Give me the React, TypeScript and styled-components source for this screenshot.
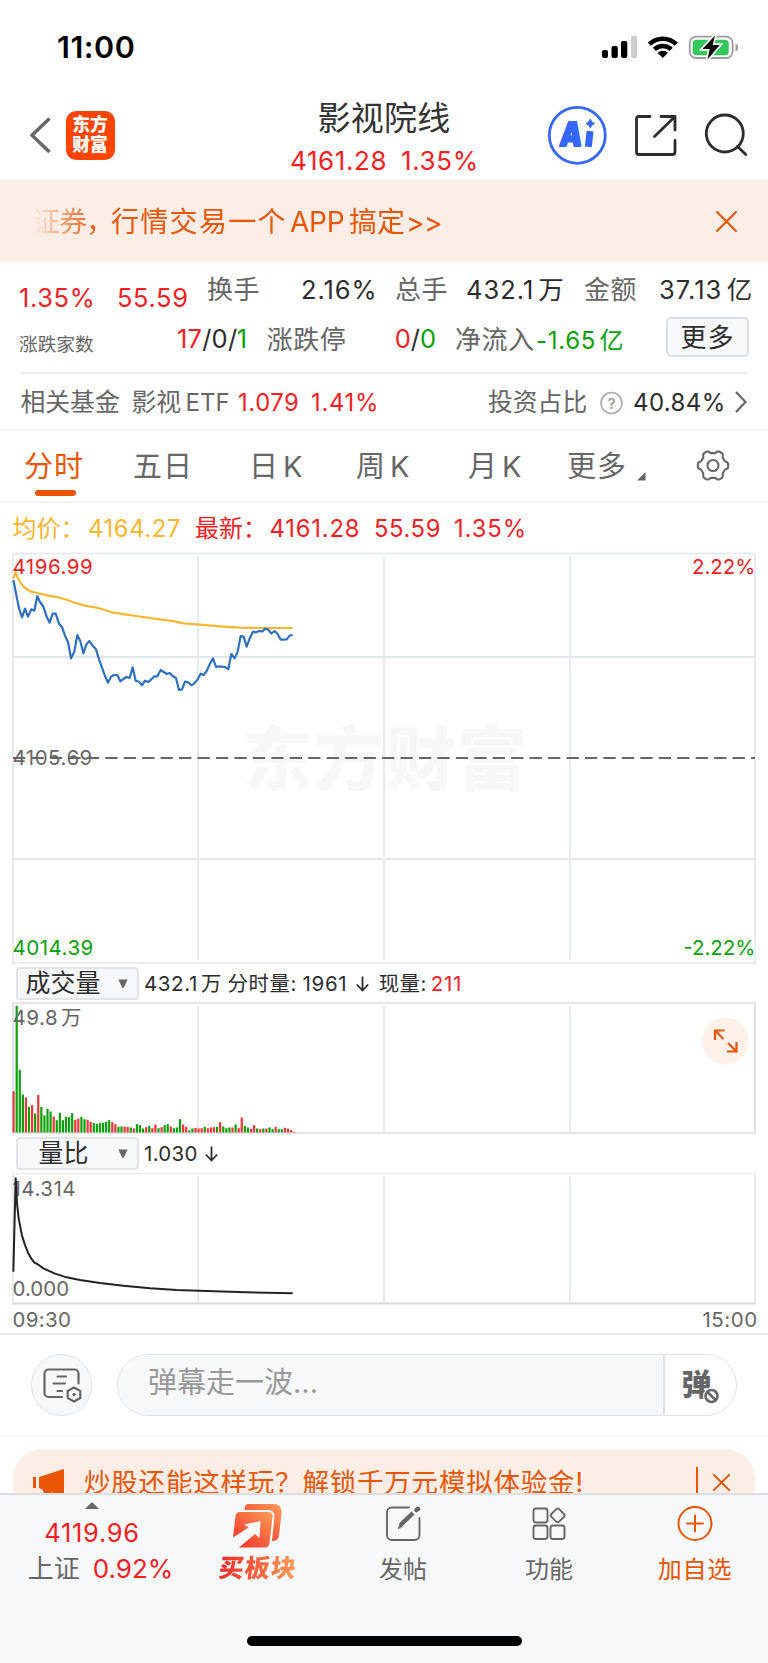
import React from "react";
import styled, { createGlobalStyle } from "styled-components";

const C = {
  red: "#fb1d1f",
  green: "#09a209",
  orange: "#ea5504",
  ink: "#2d2d2d",
  grey: "#666",
  gold: "#fdb52f",
  blue: "#2c6fc0",
  line: "#e3e5ec",
  soft: "#f7f8fa",
  peach: "#fceee7",
};

const Global = createGlobalStyle`
  body { margin: 0; background: #fff; }
  * { box-sizing: border-box; }
  svg { display: block; flex: none; }
`;

const Page = styled.div`
  width: 768px;
  height: 1663px;
  overflow: hidden;
  display: flex;
  flex-direction: column;
  background: #fff;
  color: ${C.ink};
  font-family: Inter, "Noto Sans CJK SC", sans-serif;
`;

const Bar = styled.div<{ $h: number; $pl?: number; $line?: string }>`
  flex: none;
  display: flex;
  align-items: flex-start;
  height: ${(p) => p.$h}px;
  padding-left: ${(p) => p.$pl ?? 0}px;
  border-bottom: ${(p) => (p.$line ? `2px solid ${p.$line}` : "0")};
`;

/* One text slot of a row: fixed width, centred on half of its own line height. */
const Slot = styled.span<{ $w?: number; $h: number; $s: number; $c?: string; $ls?: number; $b?: number }>`
  flex: none;
  display: block;
  width: ${(p) => (p.$w ? `${p.$w}px` : "auto")};
  line-height: ${(p) => p.$h}px;
  font-size: ${(p) => p.$s}px;
  color: ${(p) => p.$c ?? C.ink};
  letter-spacing: ${(p) => p.$ls ?? 0}px;
  font-weight: ${(p) => p.$b ?? 400};
  white-space: pre;
`;
const Unit = styled.span<{ $gap?: number }>`
  margin-left: ${(p) => p.$gap ?? 4}px;
`;

const StatusBar = styled.div`
  flex: none;
  display: flex;
  justify-content: space-between;
  height: 88px;
  padding: 32px 28px 0 57px;
`;

const NavBar = styled.header`
  flex: none;
  display: grid;
  grid-template-columns: 290px 188px 1fr;
  height: 94px;
  border-bottom: 2px solid #efefef;
`;
const NavSide = styled.div<{ $pl: number; $gap: number }>`
  display: flex;
  align-items: center;
  gap: ${(p) => p.$gap}px;
  padding-left: ${(p) => p.$pl}px;
`;
const Logo = styled.div`
  display: flex;
  flex-direction: column;
  align-items: center;
  width: 49px;
  height: 49px;
  padding: 4px 0 0;
  border-radius: 10px;
  background: #ff4400;
  color: #fff;
  font: 800 17.8px/20.5px Inter, "Noto Sans CJK SC", sans-serif;
`;
const Title = styled.div`
  display: flex;
  flex-direction: column;
  align-items: center;
  padding-top: 8px;
`;
const TitlePrice = styled.div`
  display: flex;
  align-self: stretch;
`;

const Banner = styled(Bar)`
  background: ${C.peach};
`;
const Marquee = styled.div`
  width: 682px;
  overflow: hidden;
  display: flex;
  mask-image: linear-gradient(90deg, transparent 0, #000 64px);
`;

const MoreButton = styled.button`
  width: 83px;
  height: 40px;
  margin: 3px 0 0;
  padding: 0;
  border: 2px solid #dcdfe6;
  border-radius: 5px;
  background: ${C.soft};
  color: ${C.ink};
  font: 400 26px/35px Inter, "Noto Sans CJK SC", sans-serif;
  letter-spacing: 1px;
`;
const Rule = styled.div`
  flex: none;
  height: 2px;
  margin: 0 21px;
  background: #ececec;
`;

const Tab = styled.div<{ $w: number; $on?: boolean }>`
  flex: none;
  width: ${(p) => p.$w}px;
  line-height: 72px;
  font-size: 29px;
  letter-spacing: 1px;
  color: ${(p) => (p.$on ? C.orange : C.grey)};
  &::after {
    content: "";
    display: ${(p) => (p.$on ? "block" : "none")};
    width: 41px;
    height: 6px;
    margin: -13px 0 0 11px;
    border-radius: 3px;
    background: ${C.orange};
  }
`;

const Plot = styled.svg`
  font-family: Inter, "Noto Sans CJK SC", sans-serif;
  font-size: 20.5px;
  letter-spacing: 0.5px;
`;

const Picker = styled.div`
  flex: none;
  display: flex;
  align-items: center;
  width: 123px;
  height: 33px;
  margin: 3px 5px 0 16px;
  border: 2px solid #e2e4e9;
  border-radius: 4px;
  background: ${C.soft};
`;
const PickerText = styled.div<{ $pl: number }>`
  width: 100px;
  padding-left: ${(p) => p.$pl}px;
  font-size: 25px;
  line-height: 29px;
  white-space: nowrap;
`;

const ChatRow = styled.div`
  flex: none;
  display: flex;
  align-items: center;
  height: 102px;
  padding-left: 31px;
  border-bottom: 2px solid #f6f6f7;
`;
const RoundButton = styled.div`
  width: 61px;
  height: 62px;
  border: 1.5px solid #dfe1e6;
  border-radius: 31px;
  background: ${C.soft};
  margin-right: 25px;
`;
const ChatInput = styled.div`
  display: flex;
  width: 620px;
  height: 62px;
  border: 1.5px solid #dfe1e6;
  border-radius: 31px;
  overflow: hidden;
`;
const Placeholder = styled.div`
  width: 545px;
  padding-left: 30px;
  background: ${C.soft};
  color: #999;
  font-size: 29px;
  line-height: 55px;
`;
const DanmuSwitch = styled.div`
  flex: 1;
  border-left: 2px solid #dfe1e6;
`;

const PromoArea = styled.div`
  flex: none;
  height: 56px;
  padding: 12px 13px 0;
  overflow: hidden;
`;
const Promo = styled.div`
  display: flex;
  height: 66px;
  border-radius: 29px;
  background: ${C.peach};
`;

const BottomNav = styled.nav`
  flex: none;
  display: flex;
  height: 143px;
  border-top: 2px solid #dcdee2;
  background: ${C.soft};
`;
const NavItem = styled.div<{ $c?: string; $w?: number }>`
  flex: none;
  width: ${(p) => p.$w ?? 146}px;
  display: flex;
  flex-direction: column;
  align-items: center;
  color: ${(p) => p.$c ?? C.grey};
  font-size: 24px;
  line-height: 36px;
  white-space: nowrap;
`;
const NavLabel = styled.div<{ $ls?: number }>`
  padding-top: 1px;
  letter-spacing: ${(p) => p.$ls ?? 0}px;
`;
const IndexValue = styled.div`
  font-size: 25.5px;
  line-height: 36px;
  letter-spacing: 0.7px;
  color: ${C.red};
`;
const IndexLine = styled.div`
  display: flex;
  margin-left: 17px;
`;
const BuyLabel = styled.div`
  margin: -1px 0 0 3px;
  font-size: 25px;
  letter-spacing: 1px;
  font-weight: 900;
  transform: skewX(-6deg);
  background: linear-gradient(90deg, #ee2a26, #ff9d58);
  background-clip: text;
  -webkit-background-clip: text;
  color: transparent;
`;
const HomeArea = styled.div`
  flex: none;
  height: 27px;
  background: ${C.soft};
`;
const HomeIndicator = styled.div`
  width: 275px;
  height: 10px;
  margin-left: 247px;
  border-radius: 5px;
  background: #000;
`;

const StatusGlyphs = () => (
  <svg width="140" height="30" viewBox="600 32 140 30">
    <rect x="602" y="50" width="6" height="8" rx="2" />
    <rect x="611.5" y="46" width="6.3" height="12" rx="2" />
    <rect x="621" y="41" width="6.3" height="17" rx="2" />
    <rect x="631" y="36" width="6" height="22" rx="2" fill="#ccc" />
    <g fill="none" stroke="#000" strokeWidth="4.6">
      <path d="M649.3 44.2a19.5 19.5 0 0 1 27 0" />
      <path d="M654.4 49.4a12.2 12.2 0 0 1 16.8 0" />
    </g>
    <path d="M662.8 58l-5.2-5.2a7.6 7.6 0 0 1 10.4 0z" />
    <rect x="689.7" y="36.7" width="43" height="21.3" rx="6.5" fill="none" stroke="#9d9d9d" strokeWidth="1.8" />
    <path d="M735.5 43.5c3.6 1 3.6 7 0 8z" fill="#9d9d9d" />
    <rect x="692.7" y="39.7" width="36" height="15.5" rx="3.6" fill="#34c759" />
    <path d="M715 35.5L702.5 49h7.2l-2.2 10.5L719.8 45h-7.2z" stroke="#fff" strokeWidth="3.4" />
    <path d="M715 35.5L702.5 49h7.2l-2.2 10.5L719.8 45h-7.2z" />
  </svg>
);

const NavGlyphs = () => (
  <svg width="206" height="64" viewBox="546 103 206 64" fill="none" stroke={C.ink} strokeWidth="2.8" strokeLinecap="round" strokeLinejoin="round">
    <circle cx="577.3" cy="135.3" r="28" stroke="#3567fa" strokeWidth="2.8" />
    <text transform="translate(559 145.500) skewX(-6) scale(.84 1)" fontSize="33" fontWeight="900" fill="#3567fa" stroke="#3567fa" strokeWidth="2" fontFamily="Inter, sans-serif">A</text>
    <path d="M589.700 134.500L588.700 143.500" stroke="#3567fa" strokeWidth="7" strokeLinecap="square" />
    <path d="M590.300 119.300q1 3.500 4.300 4.300q-3.300 .8-4.300 4.300q-1-3.500-4.300-4.300q3.300-.8 4.300-4.300z" fill="#3567fa" stroke="#3567fa" strokeWidth="1" />
    <path d="M650 116.500H639a2.500 2.500 0 0 0-2.500 2.500V152a2.500 2.500 0 0 0 2.500 2.500H672.500a2.500 2.500 0 0 0 2.500-2.500V140.500" />
    <path d="M661 116.500H675V130M675 116.500L654.500 136.500" />
    <circle cx="724.800" cy="133.500" r="18.500" />
    <path d="M737.500 146.500L745.800 154.500" />
  </svg>
);

const Cross = ({ s, w, c = C.orange }: { s: number; w: number; c?: string }) => (
  <svg width={s} height={s} viewBox="0 0 20 20" stroke={c} strokeWidth={w} strokeLinecap="round">
    <path d="M1 1L19 19M19 1L1 19" />
  </svg>
);
const CloseWrap = styled.div<{ $t: number; $l?: number }>`
  margin: ${(p) => p.$t}px 0 0 ${(p) => p.$l ?? 0}px;
`;

const gearPath = (() => {
  const pts: string[] = [];
  for (let i = 0; i < 96; i++) {
    const a = (i / 96) * Math.PI * 2;
    const r = 13.8 + 1.5 * Math.tanh(2 * Math.cos(6 * a));
    pts.push(`${(18 + r * Math.cos(a)).toFixed(2)} ${(18 + r * Math.sin(a)).toFixed(2)}`);
  }
  return `M${pts.join("L")}Z`;
})();

const Gear = () => (
  <svg width="36" height="70" viewBox="0 -16.5 36 70" fill="none" stroke={C.grey} strokeWidth="2.100">
    <path d={gearPath} strokeLinejoin="round" />
    <circle cx="18" cy="18" r="5.500" />
  </svg>
);

/* Price series are stored at a third of a pixel. */
const PRICE =
  "40,240 49,285 57,325 66,352 75,326 84,350 94,328 103,332 112,288 120,306 130,320 140,350 149,368 158,341 167,341 177,371 186,381 195,407 204,426 213,475 223,455 232,405 241,424 250,460 259,434 268,423 277,436 288,448 297,478 306,503 315,528 324,548 333,530 342,525 352,525 361,544 370,537 379,531 389,534 398,502 407,542 417,545 426,556 435,542 445,546 454,538 463,529 472,529 482,510 491,516 500,522 509,519 518,528 528,534 537,570 546,568 555,545 565,547 574,556 583,550 593,538 602,521 611,525 620,513 629,493 639,475 648,501 657,499 675,501 685,507 694,462 704,475 713,455 722,408 731,410 740,440 750,413 759,395 768,397 777,393 787,394 796,386 805,389 814,401 824,393 833,402 842,419 860,418 869,407 878,405";
const AVERAGE =
  "40,235 47,218 56,240 68,257 80,268 94,275 112,279 145,287 180,293 200,299 220,307 255,317 295,324 335,337 380,344 430,351 480,358 525,364 550,370 600,374 660,379 720,383 780,384 878,384";
const RATIO =
  "40,965 47,685 51,760 56,805 66,857 75,885 84,908 94,926 103,938 112,942 130,955 165,971 200,982 240,990 300,999 370,1007 450,1015 530,1020 620,1023 740,1027 878,1030";
const VOLUME =
  "r124 g380 g188 g114 r105 g77 r82 g57 r113 g77 g51 g71 g63 r48 g37 g59 g37 g47 g46 g58 r38 r42 g47 g40 r38 r32 g28 g26 g28 g29 g32 g37 r31 r25 g17 g18 r18 r17 g15 r12 g25 g22 g12 r16 g20 r13 r24 g13 r16 g22 g25 r18 g13 g15 g40 r24 r17 g6 g12 r14 r12 r13 g17 r13 r15 r16 g17 r31 g18 g13 g15 r15 g24 r13 r45 g20 g15 r11 r22 g12 r10 g12 r12 g15 g10 r17 g10 g10 r14 r12 r7 r2".split(" ");

const VLines = ({ y1, y2 }: { y1: number; y2: number }) => (
  <path d={[198, 384, 570].map((x) => `M${x} ${y1}V${y2}`).join("")} stroke="#e6e9f0" strokeWidth="2" />
);

const PriceChart = () => (
  <Plot width="768" height="412" viewBox="0 552 768 412" fill="none">
    <text x="242.500" y="785" fontSize="70" fontWeight="900" letterSpacing="1.500" fill="#f7f7f7">东方财富</text>
    <path d="M13 657H755M13 859H755" stroke={C.line} strokeWidth="1.800" />
    <VLines y1={556} y2={960} />
    <path d="M12.500 553.500H755M12.500 963H755M13 553V964M755 553V964" stroke={C.line} strokeWidth="1.500" />
    <path d="M13 758H755" stroke="#666" strokeWidth="2" strokeDasharray="12.300 6.150" />
    <g transform="translate(0 500) scale(.33333)" strokeWidth="6.500" strokeLinejoin="round">
      <polyline points={AVERAGE} stroke={C.gold} />
      <polyline points={PRICE} stroke={C.blue} />
    </g>
    <text x="12.500" y="573.500" fill={C.red}>4196.99</text>
    <text x="12.500" y="765" fill={C.grey}>4105.69</text>
    <text x="12.500" y="955" fill={C.green}>4014.39</text>
    <text x="755.500" y="573.500" textAnchor="end" letterSpacing="0" fill={C.red}>2.22%</text>
    <text x="755.500" y="955" textAnchor="end" letterSpacing="0" fill={C.green}>-2.22%</text>
  </Plot>
);

const VolumeChart = () => (
  <Plot width="768" height="132" viewBox="0 1002 768 132" fill="none">
    <VLines y1={1006} y2={1132} />
    <path d="M12.500 1003H755V1133H12.500M13 1003V1133" stroke="#dbdce3" strokeWidth="1.600" />
    {VOLUME.map((v, i) => {
      const h = Number(v.slice(1)) / 3;
      return <rect key={i} x={12.5 + i * 3.083} y={1132.5 - h} width="2.2" height={h} fill={v[0] === "r" ? "#f03438" : C.green} />;
    })}
    <text x="12.500" y="1025" fill={C.grey}>49.8<tspan dx="3">万</tspan></text>
    <circle cx="725.500" cy="1041" r="23.500" fill="#fdf1ea" />
    <path d="M715 1040V1030.500H724.500M715 1030.500L723.500 1039M736.500 1042V1051.500H727M736.500 1051.500L728 1043" stroke={C.orange} strokeWidth="2.200" />
  </Plot>
);

const RatioChart = () => (
  <Plot width="768" height="132" viewBox="0 1173 768 132" fill="none">
    <VLines y1={1176} y2={1302} />
    <path d="M12.500 1173.500H755" stroke="#ebecf0" strokeWidth="1.500" />
    <path d="M755 1173V1304M13 1173V1304" stroke="#dfe1e7" strokeWidth="1.500" />
    <path d="M12.500 1303.500H755" stroke="#d6d8de" strokeWidth="1.800" />
    <text x="12.500" y="1195.500" fill={C.grey}>14.314</text>
    <text x="12.500" y="1296" fill={C.grey} letterSpacing="0">0.000</text>
    <polyline transform="translate(0 950) scale(.33333)" points={RATIO} stroke="#222" strokeWidth="6" strokeLinejoin="round" />
  </Plot>
);

const Caret = () => (
  <svg width="10" height="9" viewBox="0 0 10 9" fill={C.grey}>
    <path d="M.3 .5H9.700L5.500 9H4.500z" />
  </svg>
);
const DownArrow = ({ h }: { h: number }) => (
  <svg width="21" height={h} viewBox={`-4 ${-h / 2} 21 ${h}`} fill="none" stroke={C.ink} strokeWidth="1.800">
    <path d="M6.500 -7V7M.8 1L6.500 7L12.200 1" />
  </svg>
);

export default function App() {
  return (
    <>
      <Global />
      <Page>
        <StatusBar>
          <Slot $h={30} $s={30.5} $b={600} $c="#000" $ls={0.5}>11:00</Slot>
          <StatusGlyphs />
        </StatusBar>

        <NavBar>
          <NavSide $pl={28} $gap={13.5}>
            <svg width="24" height="40" viewBox="28 115 24 40" fill="none" stroke={C.grey} strokeWidth="3.400">
              <path d="M49.500 118.500L32 135.300L49.500 152" />
            </svg>
            <Logo><span>东方</span><span>财富</span></Logo>
          </NavSide>
          <Title>
            <Slot $h={44} $s={33} $c="#333" $ls={0.3}>影视院线</Slot>
            <TitlePrice>
              <Slot $h={42} $s={26} $w={111} $c={C.red} $ls={0.6}>4161.28</Slot>
              <Slot $h={42} $s={26} $c={C.red} $ls={0.6}>1.35%</Slot>
            </TitlePrice>
          </Title>
          <NavSide $pl={68} $gap={0}><NavGlyphs /></NavSide>
        </NavBar>

        <Banner $h={80} $pl={32}>
          <Marquee>
            <Slot $h={80} $s={28} $w={79} $c={C.orange} $ls={-1}>证券，</Slot>
            <Slot $h={80} $s={28} $w={179} $c={C.orange} $ls={1.3}>行情交易一个</Slot>
            <Slot $h={80} $s={28} $w={59} $c={C.orange} $ls={-0.2}>APP</Slot>
            <Slot $h={80} $s={28} $w={57} $c={C.orange}>搞定</Slot>
            <Slot $h={82} $s={28} $c={C.orange} $ls={-0.5}>&gt;&gt;</Slot>
          </Marquee>
          <CloseWrap $t={29} $l={2}><Cross s={21} w={2} /></CloseWrap>
        </Banner>

        <Bar $h={52} $pl={19}>
          <Slot $h={71} $s={25.5} $w={98} $c={C.red} $ls={0.6}>1.35%</Slot>
          <Slot $h={71} $s={25.5} $w={90} $c={C.red} $ls={0.6}>55.59</Slot>
          <Slot $h={56} $s={26} $w={94} $c={C.grey} $ls={0.5}>换手</Slot>
          <Slot $h={56} $s={25.5} $w={94} $ls={0.9}>2.16%</Slot>
          <Slot $h={56} $s={26} $w={71} $c={C.grey} $ls={0.5}>总手</Slot>
          <Slot $h={56} $s={25.5} $w={118} $ls={1}>432.1<Unit>万</Unit></Slot>
          <Slot $h={56} $s={26} $w={75} $c={C.grey} $ls={0.5}>金额</Slot>
          <Slot $h={56} $s={25.5} $ls={1}>37.13<Unit $gap={4.5}>亿</Unit></Slot>
        </Bar>
        <Bar $h={58} $pl={19}>
          <Slot $h={61} $s={18.7} $w={158} $c={C.grey}>涨跌家数</Slot>
          <Slot $h={50} $s={25.5} $c={C.red} $ls={0.2}>17</Slot>
          <Slot $h={50} $s={25.5} $w={34.5} $ls={0.2}>/0/</Slot>
          <Slot $h={50} $s={25.5} $w={30} $c={C.green}>1</Slot>
          <Slot $h={51} $s={26} $w={128} $c={C.grey} $ls={0.5}>涨跌停</Slot>
          <Slot $h={50} $s={25.5} $c={C.red}>0</Slot>
          <Slot $h={50} $s={25.5}>/</Slot>
          <Slot $h={50} $s={25.5} $w={35} $c={C.green}>0</Slot>
          <Slot $h={51} $s={26} $w={81} $c={C.grey} $ls={0.5}>净流入</Slot>
          <Slot $h={54} $s={24} $w={130} $c={C.green} $ls={0.7}>-1.65<Unit $gap={3.5}>亿</Unit></Slot>
          <MoreButton>更多</MoreButton>
        </Bar>
        <Rule />

        <Bar $h={57} $pl={20.5} $line="#f3f3f3">
          <Slot $h={57} $s={24.800} $w={111} $c={C.grey}>相关基金</Slot>
          <Slot $h={57} $s={24.800} $w={54} $c={C.grey}>影视</Slot>
          <Slot $h={57} $s={24} $w={52.5} $c={C.grey}>ETF</Slot>
          <Slot $h={57} $s={23.800} $w={73} $c={C.red} $ls={0.6}>1.079</Slot>
          <Slot $h={57} $s={23.800} $w={177} $c={C.red} $ls={0.7}>1.41%</Slot>
          <Slot $h={57} $s={24.800} $w={112} $c={C.grey}>投资占比</Slot>
          <svg width="33" height="57" viewBox="0 0 33 57" fontFamily="Inter, sans-serif">
            <circle cx="11.500" cy="29" r="10.500" fill="none" stroke="#aaa" strokeWidth="1.600" />
            <text x="11.500" y="34.500" fontSize="15" textAnchor="middle" fill="#888">?</text>
          </svg>
          <Slot $h={57} $s={24} $w={102} $ls={0.4}>40.84%</Slot>
          <svg width="12" height="57" viewBox="0 0 12 57" fill="none" stroke={C.grey} strokeWidth="2.200">
            <path d="M1 18L10.500 28L1 38" />
          </svg>
        </Bar>

        <Bar $h={72} $pl={24} $line="#f3f3f3">
          <Tab $w={109} $on>分时</Tab>
          <Tab $w={116}>五日</Tab>
          <Tab $w={107}>日<Unit>K</Unit></Tab>
          <Tab $w={112}>周<Unit>K</Unit></Tab>
          <Tab $w={99}>月<Unit>K</Unit></Tab>
          <Tab $w={70}>更多</Tab>
          <svg width="58" height="70" viewBox="0 0 58 70" fill={C.grey}><path d="M8.500 41V49.500H0z" /></svg>
          <Gear />
        </Bar>

        <Bar $h={49} $pl={12.5}>
          <Slot $h={51} $s={24} $w={75.5} $c={C.gold}>均价：</Slot>
          <Slot $h={51} $s={23.800} $w={107} $c={C.gold} $ls={0.6}>4164.27</Slot>
          <Slot $h={51} $s={24} $w={74.5} $c={C.red}>最新：</Slot>
          <Slot $h={51} $s={23.800} $w={104.5} $c={C.red} $ls={0.8}>4161.28</Slot>
          <Slot $h={51} $s={23.800} $w={80} $c={C.red} $ls={0.6}>55.59</Slot>
          <Slot $h={51} $s={23.800} $c={C.red} $ls={0.9}>1.35%</Slot>
        </Bar>

        <PriceChart />
        <Bar $h={38}>
          <Picker><PickerText $pl={7.5}>成交量</PickerText><Caret /></Picker>
          <Slot $h={39} $s={20.5} $w={83.5} $ls={0.6}>432.1<Unit $gap={3}>万</Unit></Slot>
          <Slot $h={39} $s={20.5} $w={75} $ls={0.5}>分时量:</Slot>
          <Slot $h={39} $s={20.5} $w={49} $ls={0.7}>1961</Slot>
          <DownArrow h={39} />
          <Slot $h={39} $s={20.5} $w={52} $ls={0.4}> 现量:</Slot>
          <Slot $h={39} $s={20.5} $c={C.red} $ls={0.6}> 211</Slot>
        </Bar>
        <VolumeChart />
        <Bar $h={39}>
          <Picker><PickerText $pl={20.5}>量比</PickerText><Caret /></Picker>
          <Slot $h={39} $s={20.5} $w={57} $ls={0.3}>1.030</Slot>
          <DownArrow h={39} />
        </Bar>
        <RatioChart />
        <Bar $h={30} $pl={12.5} $line="#e9e9eb">
          <Slot $h={30} $s={20.5} $w={690} $c={C.grey} $ls={0.3}>09:30</Slot>
          <Slot $h={30} $s={20.5} $c={C.grey} $ls={0.5}>15:00</Slot>
        </Bar>

        <ChatRow>
          <RoundButton>
            <svg width="58" height="59" viewBox="32 1355.500 58 59" fill="none" stroke={C.grey} strokeWidth="2.200" strokeLinecap="round" strokeLinejoin="round">
              <path d="M62 1397.500H48.500a4 4 0 0 1-4-4V1374a4 4 0 0 1 4-4H74.500a4 4 0 0 1 4 4V1384" />
              <path d="M57.500 1377H66M53.500 1384H65M57.500 1391.500H62" />
              <path d="M74 1388L80.300 1391.500V1398.500L74 1402L67.700 1398.500V1391.500Z" />
              <circle cx="74" cy="1395" r="1.200" fill={C.grey} strokeWidth="1" />
            </svg>
          </RoundButton>
          <ChatInput>
            <Placeholder>弹幕走一波...</Placeholder>
            <DanmuSwitch>
              <svg width="70" height="59" viewBox="665 1355 70 59">
                <text x="681.500" y="1395" fontSize="30" fontWeight="900" fill={C.grey} fontFamily='"Noto Sans CJK SC", sans-serif'>弹</text>
                <circle cx="711.500" cy="1396" r="8.500" fill="#fff" />
                <g fill="none" stroke={C.grey} strokeWidth="2.600">
                  <circle cx="711.500" cy="1396" r="6" />
                  <path d="M707.500 1392L715.500 1400" />
                </g>
              </svg>
            </DanmuSwitch>
          </ChatInput>
        </ChatRow>

        <PromoArea>
          <Promo>
            <svg width="71" height="66" viewBox="13 1449 71 66" fill={C.orange}>
              <path d="M33 1477H36V1488H33zM39 1477L64 1469V1494H54Q52 1491 50 1494H44L43 1490L39 1488z" />
            </svg>
            <Slot $h={66} $s={26.5} $w={603} $c={C.orange} $ls={0.8}>炒股还能这样玩？解锁千万元模拟体验金!</Slot>
            <svg width="26" height="66" viewBox="0 0 26 66" fill={C.orange}><rect x="9" y="18" width="2" height="34" /></svg>
            <CloseWrap $t={25}><Cross s={17} w={2.400} /></CloseWrap>
          </Promo>
        </PromoArea>

        <BottomNav>
          <NavItem $w={184}>
            <svg width="14" height="20" viewBox="0 0 14 20" fill={C.grey}><path d="M0 14L7 7L14 14z" /></svg>
            <IndexValue>4119.96</IndexValue>
            <IndexLine>
              <Slot $h={36} $s={26} $w={65} $c={C.grey}>上证</Slot>
              <Slot $h={36} $s={26} $c={C.red}>0.92%</Slot>
            </IndexLine>
          </NavItem>
          <NavItem>
            <svg width="50" height="56" viewBox="232 1495 50 56">
              <defs>
                <linearGradient id="hot" x1="0" y1="1" x2="1" y2="0">
                  <stop offset="0" stopColor="#ee2a26" />
                  <stop offset="1" stopColor="#ff9d58" />
                </linearGradient>
              </defs>
              <path d="M248 1504H273Q282 1504 281.500 1513L279 1536Q278.500 1541 272 1541L274.500 1517Q275 1510 268 1510H244.500Q244.500 1504 248 1504z" fill="url(#hot)" />
              <path d="M240 1512H268Q273 1512 272.500 1517L269.500 1543Q269 1547.500 264 1547.500H239L255 1534L259.500 1538L260.500 1521L244 1524.500L248.500 1527.500L233 1537.500L235.500 1516Q236 1512 240 1512z" fill="url(#hot)" />
            </svg>
            <BuyLabel>买板块</BuyLabel>
          </NavItem>
          <NavItem>
            <svg width="36" height="56" viewBox="385 1495 36 56" fill="none" stroke={C.grey} strokeWidth="1.900" strokeLinecap="round">
              <path d="M409 1507.500H392a5 5 0 0 0-5 5V1535a5 5 0 0 0 5 5H414.500a5 5 0 0 0 5-5V1518" />
              <path d="M401 1524.500L413 1513" strokeWidth="4.500" strokeLinecap="butt" />
              <path d="M398 1529L400 1523L403 1526z" fill={C.grey} strokeWidth=".5" />
              <path d="M416.500 1510L418 1508.800" strokeWidth="4.500" />
            </svg>
            <NavLabel>发帖</NavLabel>
          </NavItem>
          <NavItem>
            <svg width="34" height="56" viewBox="532 1495 34 56" fill="none" stroke={C.grey} strokeWidth="1.900" strokeLinejoin="round">
              <rect x="533.500" y="1508.500" width="14" height="14" rx="2.500" />
              <rect x="533.500" y="1525.500" width="14" height="13.500" rx="2.500" />
              <rect x="550.500" y="1525.500" width="14" height="13.500" rx="2.500" />
              <rect x="552.300" y="1510" width="10.800" height="10.800" rx="2" transform="rotate(45 557.700 1515.400)" />
            </svg>
            <NavLabel>功能</NavLabel>
          </NavItem>
          <NavItem $c={C.orange}>
            <svg width="36" height="56" viewBox="677 1495 36 56" fill="none" stroke={C.orange} strokeWidth="2" strokeLinecap="round">
              <circle cx="695" cy="1523.500" r="16.500" />
              <path d="M695 1515.500V1531.500M687 1523.500H703" />
            </svg>
            <NavLabel $ls={0.9}>加自选</NavLabel>
          </NavItem>
        </BottomNav>
        <HomeArea><HomeIndicator /></HomeArea>
      </Page>
    </>
  );
}
